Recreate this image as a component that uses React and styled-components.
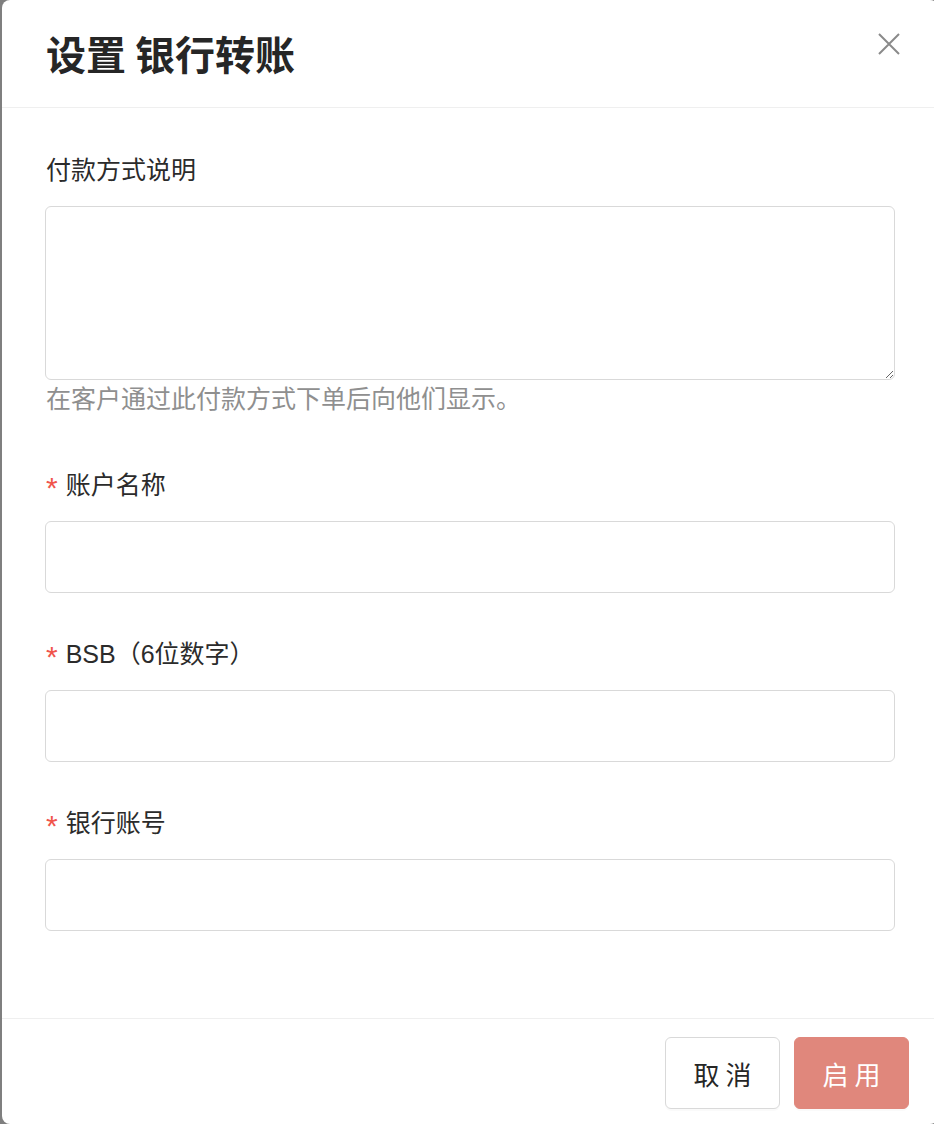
import React from "react";
import styled, { createGlobalStyle } from "styled-components";

const GlobalStyle = createGlobalStyle`
  html, body { margin: 0; padding: 0; }
  body {
    font-family: "Liberation Sans", "Noto Sans CJK SC", sans-serif;
    background: #7f7f7f;
  }
  * { box-sizing: border-box; }
`;

const Backdrop = styled.div`
  height: 100vh;
  background: #7f7f7f;
  padding-left: 2px;
  display: flex;
  overflow: hidden;
`;

const Modal = styled.div`
  flex-shrink: 0;
  width: 936px;
  height: 1124px;
  background: #fff;
  border-radius: 8px;
  display: flex;
  flex-direction: column;
`;

const Header = styled.div`
  height: 108px;
  flex-shrink: 0;
  border-bottom: 1px solid #efefef;
  display: flex;
  align-items: flex-start;
  justify-content: space-between;
  padding: 26px 38px 0 44px;
`;

const Title = styled.h1`
  margin: 0;
  font-family: "Noto Sans CJK SC", sans-serif;
  font-size: 40px;
  line-height: 54px;
  font-weight: 700;
  color: #262626;
`;

const CloseButton = styled.button`
  margin-top: 7px;
  width: 22px;
  height: 22px;
  padding: 0;
  border: 0;
  background: none;
  cursor: pointer;
  display: flex;
`;

const Body = styled.div`
  flex: 1;
  padding: 44px 43px 0;
  display: flex;
  flex-direction: column;
  gap: 43px;
`;

const Field = styled.div`
  display: flex;
  flex-direction: column;
`;

const Label = styled.label`
  display: flex;
  align-items: center;
  font-size: 25px;
  line-height: 36px;
  color: #2b2b2b;
  margin-bottom: 18px;
  padding-left: 1px;
`;

const Required = styled.span`
  font-family: "Liberation Sans", sans-serif;
  color: #f0544c;
  font-size: 30px;
  margin-right: 8px;
  position: relative;
  top: 3px;
`;

const TextArea = styled.textarea`
  height: 174px;
  width: 100%;
  border: 1px solid #d9d9d9;
  border-radius: 6px;
  padding: 10px 14px;
  font: inherit;
  font-size: 24px;
  outline: none;
`;

const Input = styled.input`
  height: 72px;
  width: 100%;
  border: 1px solid #d9d9d9;
  border-radius: 6px;
  padding: 0 14px;
  font: inherit;
  font-size: 24px;
  outline: none;
`;

const Help = styled.div`
  font-size: 25px;
  line-height: 36px;
  color: #8f8f8f;
  padding-left: 1px;
  margin-top: 1px;
  margin-bottom: 7px;
`;

const Footer = styled.div`
  flex-shrink: 0;
  border-top: 1px solid #efefef;
  padding: 18px 29px 15px;
  display: flex;
  justify-content: flex-end;
  gap: 14px;
`;

const Button = styled.button`
  width: 115px;
  height: 72px;
  border-radius: 6px;
  font-family: "Noto Sans CJK SC", sans-serif;
  font-size: 26px;
  cursor: pointer;
  border: 1px solid ${(p) => (p.$primary ? "#e0877c" : "#d9d9d9")};
  background: ${(p) => (p.$primary ? "#e0877c" : "#fff")};
  color: ${(p) => (p.$primary ? "#fff" : "#262626")};
  box-shadow: 0 2px 0 rgba(0, 0, 0, 0.02);
`;

const fields = [
  { label: "账户名称" },
  { label: "BSB（6位数字）" },
  { label: "银行账号" },
];

export default function App() {
  return (
    <>
      <GlobalStyle />
      <Backdrop>
        <Modal>
          <Header>
            <Title>设置 银行转账</Title>
            <CloseButton aria-label="close">
              <svg width="22" height="22" viewBox="0 0 22 22">
                <path
                  d="M1 1 L21 21 M21 1 L1 21"
                  stroke="#8a8a8a"
                  strokeWidth="2"
                  fill="none"
                />
              </svg>
            </CloseButton>
          </Header>
          <Body>
            <Field>
              <Label>付款方式说明</Label>
              <TextArea />
              <Help>在客户通过此付款方式下单后向他们显示。</Help>
            </Field>
            {fields.map((f) => (
              <Field key={f.label}>
                <Label>
                  <Required>*</Required>
                  {f.label}
                </Label>
                <Input />
              </Field>
            ))}
          </Body>
          <Footer>
            <Button>取 消</Button>
            <Button $primary>启 用</Button>
          </Footer>
        </Modal>
      </Backdrop>
    </>
  );
}
